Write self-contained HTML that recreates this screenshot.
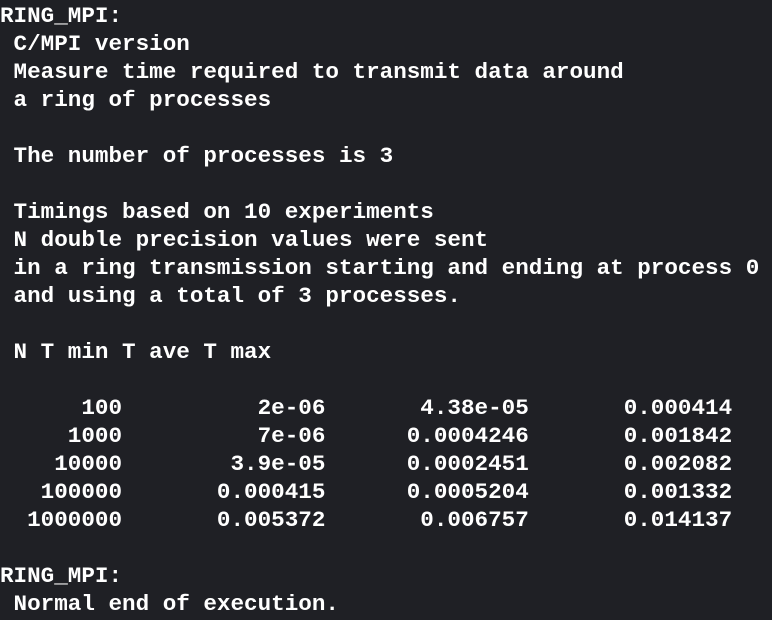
<html><body style="margin:0;background:#1f2025;width:772px;height:620px;overflow:hidden"><pre style="margin:0;padding-top:2px;font:bold 22.6px/28px 'Liberation Mono',monospace;color:#fff;letter-spacing:0">RING_MPI:
 C/MPI version
 Measure time required to transmit data around
 a ring of processes

 The number of processes is 3

 Timings based on 10 experiments
 N double precision values were sent
 in a ring transmission starting and ending at process 0
 and using a total of 3 processes.

 N T min T ave T max

      100          2e-06       4.38e-05       0.000414
     1000          7e-06      0.0004246       0.001842
    10000        3.9e-05      0.0002451       0.002082
   100000       0.000415      0.0005204       0.001332
  1000000       0.005372       0.006757       0.014137

RING_MPI:
 Normal end of execution.</pre></body></html>
